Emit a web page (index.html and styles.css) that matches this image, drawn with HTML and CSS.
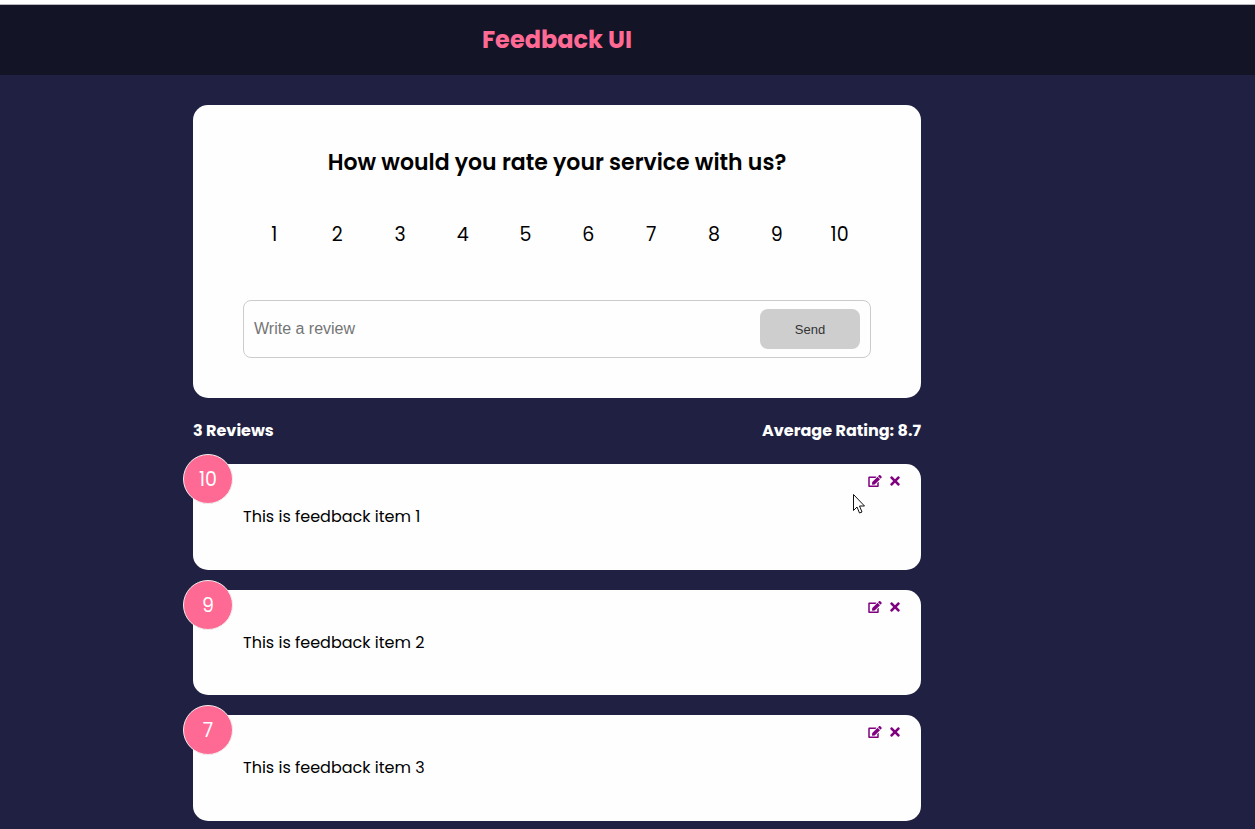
FILE: index.html
```html
<!DOCTYPE html>
<html lang="en">
<head>
<meta charset="utf-8">
<title>Feedback UI</title>
<link rel="stylesheet" href="styles.css">
</head>
<body>
<svg class="sprite" aria-hidden="true">
  <symbol id="icon-edit" viewBox="0 0 576 512"><path d="M402.6 83.2l90.2 90.2c3.8 3.8 3.8 10 0 13.8L274.4 405.6l-92.8 10.3c-12.4 1.4-22.9-9.1-21.5-21.5l10.3-92.8L388.8 83.2c3.8-3.8 10-3.8 13.8 0zm162-22.9l-48.8-48.8c-15.2-15.2-39.9-15.2-55.2 0l-35.4 35.4c-3.8 3.8-3.8 10 0 13.8l90.2 90.2c3.8 3.8 10 3.8 13.8 0l35.4-35.4c15.2-15.3 15.2-40 0-55.2zM384 346.2V448H64V128h229.8c3.2 0 6.2-1.3 8.5-3.5l40-40c7.6-7.6 2.2-20.5-8.5-20.5H48C21.5 64 0 85.5 0 112v352c0 26.5 21.5 48 48 48h352c26.5 0 48-21.5 48-48V306.2c0-10.7-12.9-16-20.5-8.5l-40 40c-2.2 2.3-3.5 5.3-3.5 8.5z"/></symbol>
  <symbol id="icon-times" viewBox="0 0 352 512"><path d="M242.72 256l100.07-100.07c12.28-12.28 12.28-32.19 0-44.48l-22.24-22.24c-12.28-12.28-32.19-12.28-44.48 0L176 189.28 75.93 89.21c-12.28-12.28-32.19-12.28-44.48 0L9.21 111.45c-12.28 12.28-12.28 32.19 0 44.48L109.28 256 9.21 356.07c-12.28 12.28-12.28 32.19 0 44.48l22.24 22.24c12.28 12.28 32.2 12.28 44.48 0L176 322.72l100.07 100.07c12.28 12.28 32.2 12.28 44.48 0l22.24-22.24c12.28-12.28 12.28-32.19 0-44.48L242.72 256z"/></symbol>
</svg>
<header class="header"><h1 class="header-title">Feedback UI</h1></header>
<main class="container">
  <form class="card form-card">
    <h2 class="question" id="question">How would you rate your service with us?</h2>
    <div class="rating" role="radiogroup" aria-labelledby="question">
      <label class="rate"><input type="radio" name="rating" value="1">1</label>
      <label class="rate"><input type="radio" name="rating" value="2">2</label>
      <label class="rate"><input type="radio" name="rating" value="3">3</label>
      <label class="rate"><input type="radio" name="rating" value="4">4</label>
      <label class="rate"><input type="radio" name="rating" value="5">5</label>
      <label class="rate"><input type="radio" name="rating" value="6">6</label>
      <label class="rate"><input type="radio" name="rating" value="7">7</label>
      <label class="rate"><input type="radio" name="rating" value="8">8</label>
      <label class="rate"><input type="radio" name="rating" value="9">9</label>
      <label class="rate"><input type="radio" name="rating" value="10">10</label>
    </div>
    <div class="input-group">
      <input class="review" type="text" placeholder="Write a review" aria-label="Write a review">
      <button class="send" type="submit" disabled>Send</button>
    </div>
  </form>
  <div class="stats">
    <h4 class="stat">3 Reviews</h4>
    <h4 class="stat">Average Rating: 8.7</h4>
  </div>
  <article class="card item">
    <div class="badge">10</div>
    <div class="actions">
      <button class="action" type="button" aria-label="Edit"><svg class="edit"><use href="#icon-edit"/></svg></button>
      <button class="action" type="button" aria-label="Delete"><svg class="times"><use href="#icon-times"/></svg></button>
    </div>
    <p class="text">This is feedback item 1</p>
    <svg class="cursor" viewBox="0 0 12 20" aria-hidden="true"><path d="M.5 .5V16.5L4 13l2.5 6 2.5-1-2.5-6h5z"/></svg>
  </article>
  <article class="card item">
    <div class="badge">9</div>
    <div class="actions">
      <button class="action" type="button" aria-label="Edit"><svg class="edit"><use href="#icon-edit"/></svg></button>
      <button class="action" type="button" aria-label="Delete"><svg class="times"><use href="#icon-times"/></svg></button>
    </div>
    <p class="text">This is feedback item 2</p>
  </article>
  <article class="card item">
    <div class="badge">7</div>
    <div class="actions">
      <button class="action" type="button" aria-label="Edit"><svg class="edit"><use href="#icon-edit"/></svg></button>
      <button class="action" type="button" aria-label="Delete"><svg class="times"><use href="#icon-times"/></svg></button>
    </div>
    <p class="text">This is feedback item 3</p>
  </article>
</main>
</body>
</html>
```
FILE: styles.css
```css
* { box-sizing: border-box; margin: 0; padding: 0; }
body {
  background: #202142;
  border-top: 4px solid #fff;
  color: #000;
  font-family: Poppins, Inter, "Open Sans", sans-serif;
  font-size: 16px;
  line-height: 1.6;
}
.sprite { display: none; }
.header {
  padding: 16px 141px 16px 0;
  border-top: 1px solid #b9b9bd;
  background: #131426;
  text-align: center;
}
.header-title { color: #ff6a95; font-size: 24px; line-height: 38px; font-weight: 700; }
.container {
  display: flex;
  flex-direction: column;
  gap: 20px;
  max-width: 909px;
  margin: 0 auto;
  padding: 30px 161px 8px 20px;
}
.card { position: relative; background: #fefefe; border-radius: 15px; padding: 40px 50px; }
.question { text-align: center; font-size: 22px; line-height: 35px; font-weight: 600; }
.rating { display: flex; margin: 30px 0 40px; }
.rate {
  flex: 1;
  font-size: 19px;
  line-height: 50px;
  text-align: center;
  cursor: pointer;
}
.rate input { position: absolute; opacity: 0; }
.input-group {
  display: flex;
  align-items: center;
  border: 1px solid #ccc;
  border-radius: 8px;
  padding: 8px 10px;
}
.review {
  flex: 1;
  min-width: 0;
  border: 0;
  outline: 0;
  background: transparent;
  font: 16px "Liberation Sans", Arial, sans-serif;
}
.review::placeholder { color: #757575; }
.send {
  width: 100px;
  height: 40px;
  border: 0;
  border-radius: 8px;
  background: #cecece;
  color: #333;
  font: 13px "Liberation Sans", Arial, sans-serif;
}
.stats { display: flex; justify-content: space-between; color: #fff; }
.stat { font-size: 16px; line-height: 26px; font-weight: 700; }
.badge {
  position: absolute;
  top: -10px;
  left: -10px;
  width: 50px;
  height: 50px;
  border: 1px solid #eee;
  border-radius: 50%;
  background: #ff6a95;
  color: #fff;
  font-size: 19px;
  line-height: 50px;
  text-align: center;
}
.actions { position: absolute; top: 10px; right: 21px; display: flex; gap: 8px; }
.action { display: flex; align-items: center; height: 14px; border: 0; background: none; color: purple; cursor: pointer; }
.action svg { fill: currentColor; }
.edit { width: 14px; height: 12px; }
.times { width: 10px; height: 14px; }
.cursor { position: absolute; top: 30px; right: 56px; width: 12px; height: 20px; fill: #fff; stroke: #111; }
```
